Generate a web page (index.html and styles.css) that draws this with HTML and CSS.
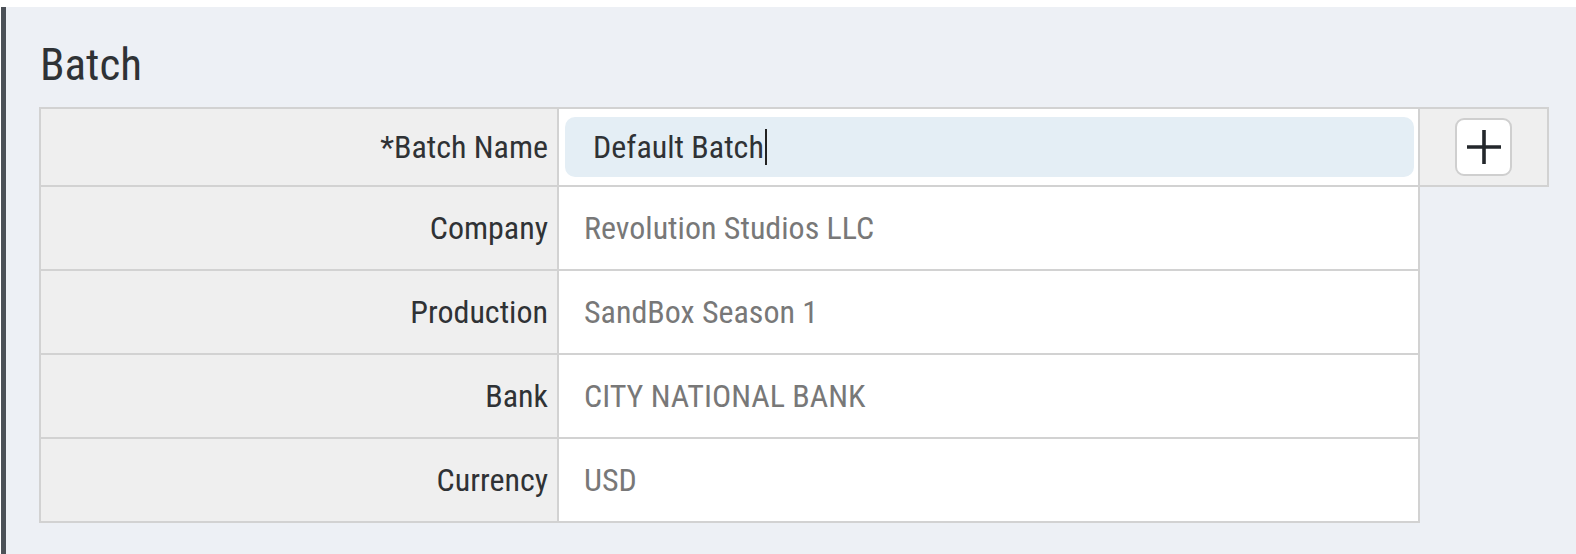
FILE: index.html
```html
<!DOCTYPE html>
<html lang="en">
<head>
<meta charset="utf-8">
<title>Batch</title>
<link rel="stylesheet" href="styles.css">
</head>
<body>
<div class="page">
  <h1 class="title">Batch</h1>
  <table class="form">
    <colgroup>
      <col class="col-label">
      <col class="col-value">
      <col class="col-action">
    </colgroup>
    <tr class="row-first">
      <th class="label">*Batch Name</th>
      <td class="value"><div class="input"><span class="input-text">Default Batch</span><span class="caret"></span></div></td>
      <td class="action"><button class="add-btn" type="button" aria-label="Add"><svg width="34" height="34" viewBox="0 0 34 34"><path d="M17 0V34M0 17H34" stroke="#23272b" stroke-width="3.6"/></svg></button></td>
    </tr>
    <tr>
      <th class="label">Company</th>
      <td class="value"><span class="text">Revolution Studios LLC</span></td>
    </tr>
    <tr>
      <th class="label">Production</th>
      <td class="value"><span class="text">SandBox Season 1</span></td>
    </tr>
    <tr>
      <th class="label">Bank</th>
      <td class="value"><span class="text">CITY NATIONAL BANK</span></td>
    </tr>
    <tr>
      <th class="label">Currency</th>
      <td class="value"><span class="text">USD</span></td>
    </tr>
  </table>
</div>
</body>
</html>
```
FILE: styles.css
```css
html, body {
  margin: 0;
  padding: 0;
  background: #ffffff;
}
body {
  font-family: Roboto, "Liberation Sans", sans-serif;
  font-stretch: 83%;
}
.page {
  margin-top: 7px;
  margin-left: 1px;
  min-height: 547px;
  box-sizing: border-box;
  border-left: 5px solid #4b5157;
  background: #edf0f5;
  padding: 30px 0 0 33px;
}
.title {
  margin: 0 0 14px 1px;
  font-size: 45px;
  line-height: 56px;
  font-weight: 400;
  color: #2f3235;
}
.form {
  border-collapse: collapse;
  table-layout: fixed;
}
.col-label { width: 518px; }
.col-value { width: 861px; }
.col-action { width: 129px; }
.form th, .form td {
  border: 2px solid #d2d2d2;
  padding: 0;
  height: 84px;
  box-sizing: border-box;
  vertical-align: middle;
}
.row-first th, .row-first td {
  height: 78px;
}
.label {
  background: #efefef;
  text-align: right;
  font-weight: 400;
  font-size: 32px;
  color: #2f3235;
  padding-right: 9px !important;
}
.value {
  background: #ffffff;
  font-size: 32px;
  color: #787878;
}
.value .text {
  padding-left: 25px;
}
.input {
  display: flex;
  align-items: center;
  margin: 0 4px 0 6px;
  height: 60px;
  border-radius: 10px;
  background: #e4eef5;
  padding-left: 28px;
  color: #2f3235;
}
.caret {
  display: inline-block;
  width: 2px;
  height: 36px;
  background: #222;
  margin-left: 1px;
}
.action {
  background: #efefef;
  text-align: center;
}
.add-btn {
  width: 57px;
  height: 58px;
  padding: 0;
  border: 2px solid #cfcfcf;
  border-radius: 9px;
  background: #ffffff;
  display: inline-flex;
  align-items: center;
  justify-content: center;
  vertical-align: middle;
}
```
